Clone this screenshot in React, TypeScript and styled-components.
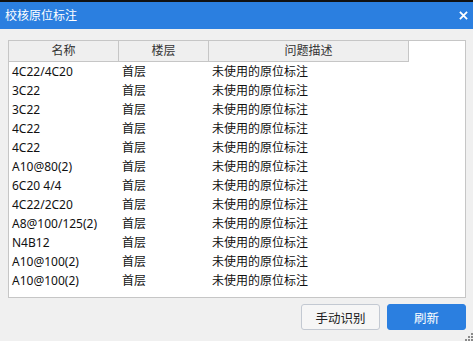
import * as React from 'react';
import styled, { createGlobalStyle } from 'styled-components';

const rows = [
  ['4C22/4C20', '首层', '未使用的原位标注'],
  ['3C22', '首层', '未使用的原位标注'],
  ['3C22', '首层', '未使用的原位标注'],
  ['4C22', '首层', '未使用的原位标注'],
  ['4C22', '首层', '未使用的原位标注'],
  ['A10@80(2)', '首层', '未使用的原位标注'],
  ['6C20 4/4', '首层', '未使用的原位标注'],
  ['4C22/2C20', '首层', '未使用的原位标注'],
  ['A8@100/125(2)', '首层', '未使用的原位标注'],
  ['N4B12', '首层', '未使用的原位标注'],
  ['A10@100(2)', '首层', '未使用的原位标注'],
  ['A10@100(2)', '首层', '未使用的原位标注'],
];

const GlobalStyle = createGlobalStyle`
  html, body {
    margin: 0;
    padding: 0;
    background: #f0f0f0;
  }
  body {
    font-family: "Noto Sans", "Noto Sans CJK SC", sans-serif;
    font-size: 12px;
  }
`;

export default function App() {
  return (
    <>
      <GlobalStyle />
      <Dialog>
        <TopEdge />
        <TitleBar>
          <Title>校核原位标注</Title>
          <CloseIcon viewBox="0 0 10 10">
            <path d="M1 1 L9 9 M9 1 L1 9" stroke="#fff" strokeWidth="2" />
          </CloseIcon>
        </TitleBar>
        <Body>
          <TableBox>
            <HeaderRow>
              <HeaderCell>名称</HeaderCell>
              <HeaderCell>楼层</HeaderCell>
              <HeaderCell>问题描述</HeaderCell>
            </HeaderRow>
            {rows.map((r, i) => (
              <Row key={i}>
                <Cell>{r[0]}</Cell>
                <Cell>{r[1]}</Cell>
                <Cell>{r[2]}</Cell>
              </Row>
            ))}
          </TableBox>
          <Footer>
            <Button>手动识别</Button>
            <Button $primary>刷新</Button>
          </Footer>
        </Body>
        <Grip viewBox="0 0 8 8">
          <rect x="6" y="0" width="2" height="2" fill="#8a8a8a" />
          <rect x="3" y="3" width="2" height="2" fill="#8a8a8a" />
          <rect x="6" y="3" width="2" height="2" fill="#8a8a8a" />
          <rect x="0" y="6" width="2" height="2" fill="#8a8a8a" />
          <rect x="3" y="6" width="2" height="2" fill="#8a8a8a" />
          <rect x="6" y="6" width="2" height="2" fill="#8a8a8a" />
        </Grip>
      </Dialog>
    </>
  );
}

const Dialog = styled.div`
  position: relative;
  width: 473px;
  height: 341px;
  background: #f0f0f0;
  display: flex;
  flex-direction: column;
  overflow: hidden;
`;

const TopEdge = styled.div`
  height: 2px;
  background: #111;
`;

const TitleBar = styled.div`
  height: 27px;
  background: #2b7fe0;
  display: flex;
  align-items: center;
  justify-content: space-between;
  padding: 0 5px 0 5px;
`;

const Title = styled.span`
  color: #fff;
  font-size: 12px;
  line-height: 1;
`;

const CloseIcon = styled.svg`
  width: 9px;
  height: 9px;
`;

const Body = styled.div`
  flex: 1;
  display: flex;
  flex-direction: column;
  padding: 11px 7px 0 8px;
`;

const TableBox = styled.div`
  height: 258px;
  box-sizing: border-box;
  border: 1px solid #c6c6c6;
  background: #fff;
  display: flex;
  flex-direction: column;
`;

const HeaderRow = styled.div`
  display: grid;
  grid-template-columns: 110px 90px 200px;
  height: 21px;
`;

const HeaderCell = styled.div`
  background: #efefef;
  border-right: 1px solid #c6c6c6;
  border-bottom: 1px solid #c6c6c6;
  color: #333;
  text-align: center;
  line-height: 20px;
`;

const Row = styled.div`
  display: grid;
  grid-template-columns: 110px 90px 1fr;
  height: 19px;
  align-items: center;
`;

const Cell = styled.div`
  padding-left: 3px;
  color: #111;
  white-space: nowrap;
  line-height: 19px;
`;

const Footer = styled.div`
  display: flex;
  justify-content: flex-end;
  gap: 7px;
  margin-top: 6px;
`;

const Button = styled.button<{ $primary?: boolean }>`
  width: 79px;
  height: 26px;
  border-radius: 3px;
  box-sizing: border-box;
  font-family: inherit;
  font-size: 12.5px;
  border: 1px solid ${({ $primary }) => ($primary ? '#2b7fe0' : '#c3c9d2')};
  background: ${({ $primary }) => ($primary ? '#2b7fe0' : '#f6f6f6')};
  color: ${({ $primary }) => ($primary ? '#fff' : '#222')};
  padding: 0;
`;

const Grip = styled.svg`
  position: absolute;
  right: 0;
  bottom: 0;
  width: 8px;
  height: 8px;
`;
